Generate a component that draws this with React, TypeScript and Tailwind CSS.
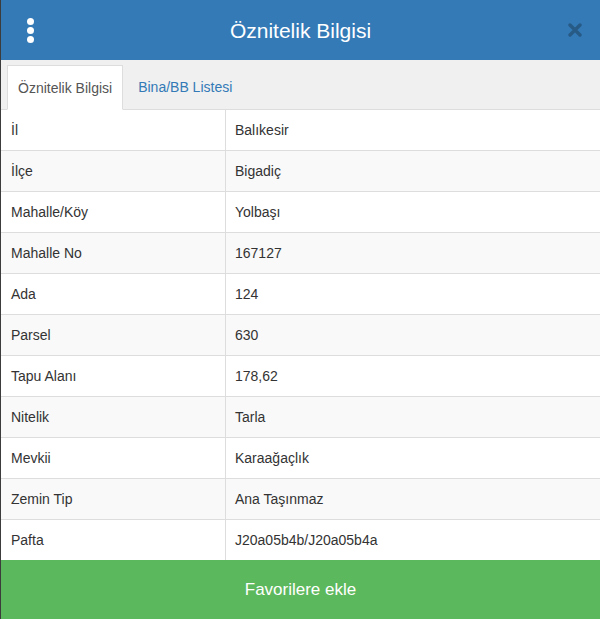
import React, { useState } from 'react';

interface AttributeRow {
  label: string;
  value: string;
}

const rows: AttributeRow[] = [
  { label: 'İl', value: 'Balıkesir' },
  { label: 'İlçe', value: 'Bigadiç' },
  { label: 'Mahalle/Köy', value: 'Yolbaşı' },
  { label: 'Mahalle No', value: '167127' },
  { label: 'Ada', value: '124' },
  { label: 'Parsel', value: '630' },
  { label: 'Tapu Alanı', value: '178,62' },
  { label: 'Nitelik', value: 'Tarla' },
  { label: 'Mevkii', value: 'Karaağaçlık' },
  { label: 'Zemin Tip', value: 'Ana Taşınmaz' },
  { label: 'Pafta', value: 'J20a05b4b/J20a05b4a' },
];

const tabs = ['Öznitelik Bilgisi', 'Bina/BB Listesi'];

const App: React.FC = () => {
  const [activeTab, setActiveTab] = useState(0);

  return (
    <div
      className="w-[600px] h-[619px] flex flex-col border-l border-[#3c3c3c] bg-white text-[#333] overflow-hidden"
      style={{ fontFamily: '"Liberation Sans", Arial, sans-serif' }}
    >
      {/* header */}
      <div className="h-[60px] shrink-0 bg-[#337ab7] flex items-center justify-between pl-[25px] pr-[17px]">
        <button type="button" className="flex flex-col gap-[2px] items-center w-[8px]">
          <span className="w-[7px] h-[7px] rounded-full bg-white" />
          <span className="w-[7px] h-[7px] rounded-full bg-white" />
          <span className="w-[7px] h-[7px] rounded-full bg-white" />
        </button>
        <h1 className="text-white text-[21px] leading-none">Öznitelik Bilgisi</h1>
        <button type="button" className="w-[16px] h-[16px] flex items-center justify-center">
          <svg width="14" height="14" viewBox="0 0 14 14">
            <path d="M2 2 L12 12 M12 2 L2 12" stroke="#285a86" strokeWidth="3.4" strokeLinecap="round" />
          </svg>
        </button>
      </div>

      {/* tabs */}
      <div className="shrink-0 bg-[#f0f0f0] pt-[5px] pl-[6px] flex border-b border-[#ddd]">
        {tabs.map((tab, i) => (
          <button
            key={tab}
            type="button"
            onClick={() => setActiveTab(i)}
            className={
              i === activeTab
                ? 'mr-[4px] px-[10px] py-[11px] text-[14px] leading-[20px] text-[#555] bg-white border border-[#ddd] border-b-white -mb-px'
                : 'mr-[4px] px-[10px] py-[11px] text-[14px] leading-[20px] text-[#337ab7] border border-transparent'
            }
          >
            {tab}
          </button>
        ))}
      </div>

      {/* attribute table */}
      <div className="flex-1">
        {rows.map((row, i) => (
          <div
            key={row.label}
            className={`flex text-[14px] ${i < rows.length - 1 ? 'h-[41px] border-b border-[#ddd]' : 'h-[40px]'} ${
              i % 2 === 1 ? 'bg-[#f9f9f9]' : 'bg-white'
            }`}
          >
            <div className="w-[225px] shrink-0 border-r border-[#ddd] pl-[10px] flex items-center">{row.label}</div>
            <div className="flex-1 pl-[9px] flex items-center">{row.value}</div>
          </div>
        ))}
      </div>

      <button
        type="button"
        className="h-[59px] shrink-0 bg-[#5cb85c] text-white text-[17px] flex items-center justify-center"
      >
        Favorilere ekle
      </button>
    </div>
  );
};

export default App;
